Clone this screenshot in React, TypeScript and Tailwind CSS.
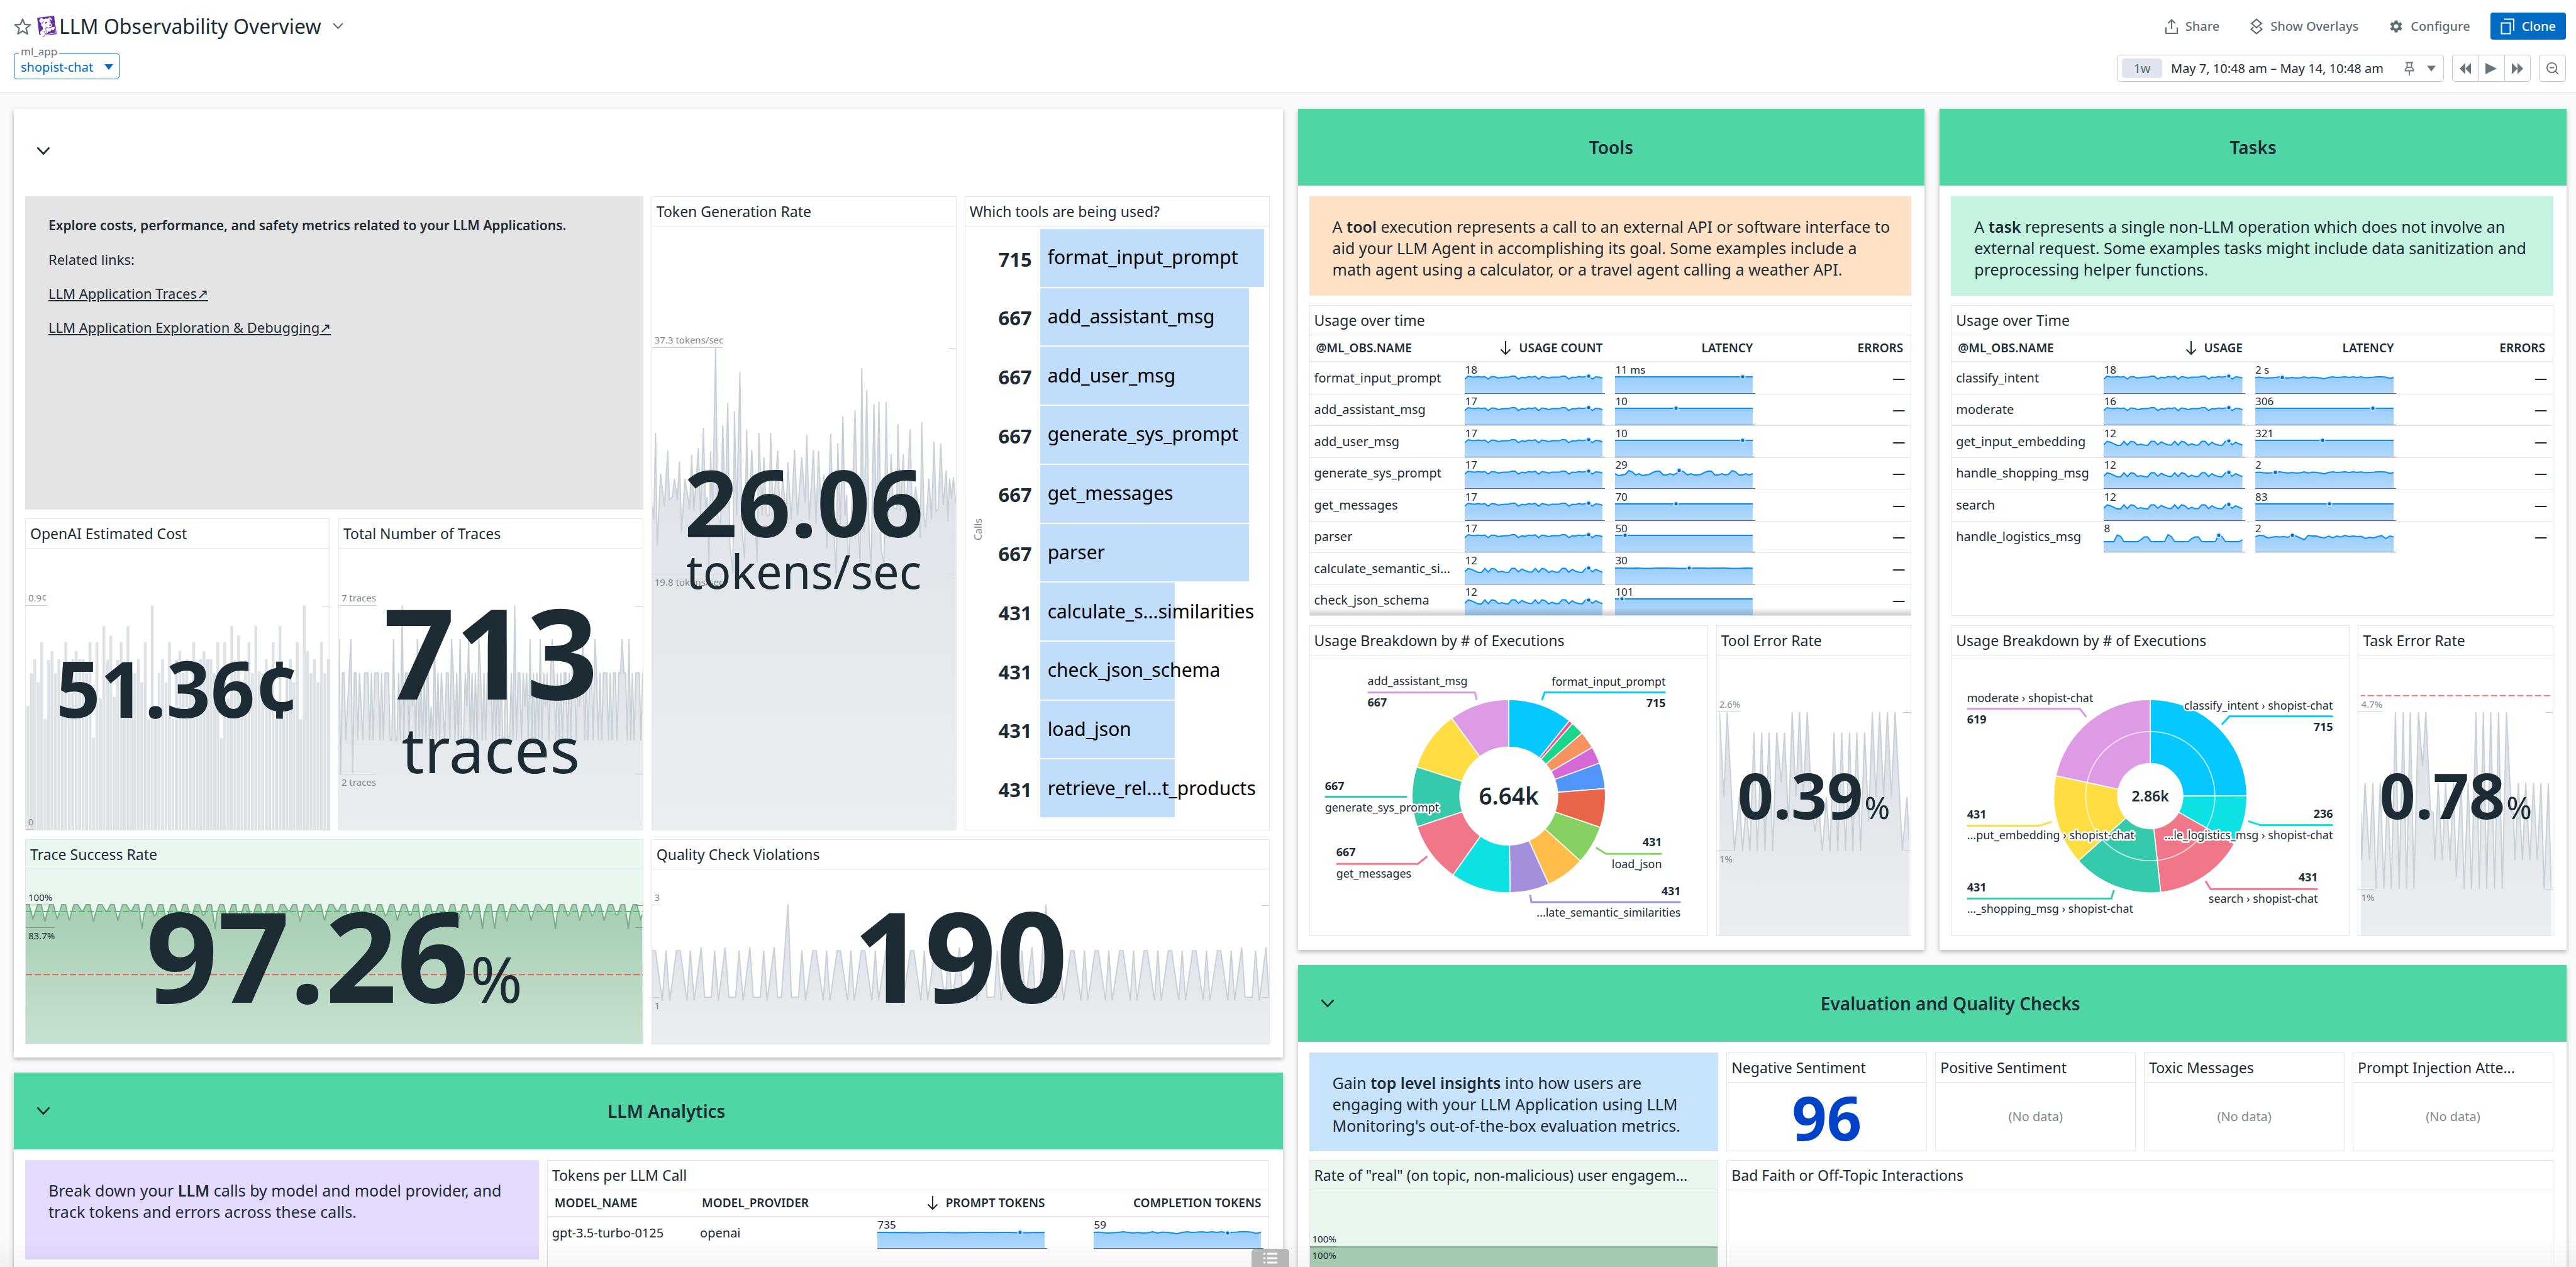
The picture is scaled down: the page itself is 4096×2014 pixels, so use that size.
import type { ReactNode } from "react";
import { ZoomOut } from "lucide-react";
import { MdSettings } from "react-icons/md";
import { SiDatadog } from "react-icons/si";

/* ---------- shared pieces ---------- */

function Chevron({ className }: { className: string }) {
  return (
    <svg viewBox="0 0 22 14" fill="none" stroke="currentColor" strokeWidth="2.6" className={className} aria-hidden="true">
      <path d="M1.5 1.5 11 11.5 20.5 1.5" />
    </svg>
  );
}

function Caret({ className }: { className: string }) {
  return (
    <svg viewBox="0 0 14 9" fill="currentColor" className={className} aria-hidden="true">
      <path d="M0 0h14L7 9z" />
    </svg>
  );
}

function Group({ title, collapsible, plain, children }: { title?: string; collapsible?: boolean; plain?: boolean; children: ReactNode }) {
  return (
    <section className="bg-white shadow-[0_3px_7px_rgba(0,0,0,0.28)]">
      <header className={`flex h-[122px] items-center ${plain ? "bg-white pt-3" : "bg-[#50d6a4]"}`}>
        {collapsible && (
          <button type="button" aria-label="Collapse group" className="ml-9 text-[#1c2b34]">
            <Chevron className="h-[14px] w-[22px]" />
          </button>
        )}
        <h2 className="flex-1 text-center text-[28px] font-semibold">{title}</h2>
      </header>
      <div className="pt-[17px] pr-[21px] pl-[18px]">{children}</div>
    </section>
  );
}

function Card({ title, className = "", children }: { title: string; className?: string; children?: ReactNode }) {
  return (
    <article className={`flex min-w-0 flex-col border border-[#e1e3ee] ${className}`}>
      <h3 className="h-[47px] shrink-0 truncate border-b border-[#e1e3ee] pl-[7px] text-[23px] leading-[46px]">{title}</h3>
      <div className="relative min-h-0 flex-1">{children}</div>
    </article>
  );
}

function Note({ className, children }: { className: string; children: ReactNode }) {
  return <div className={`pt-[31px] pr-8 pl-[37px] text-[25px] leading-[34px] ${className}`}>{children}</div>;
}

/* ---------- background plots behind big values ---------- */

type Box = [number, number, number, number];

function Ticks({ box, hi, lo, hiY, loY, dark, loAbove }: { box: Box; hi: string; lo: string; hiY: number; loY: number; dark?: boolean; loAbove?: boolean }) {
  const at = (y: number) => ({ top: `${((y - box[1]) / box[3]) * 100}%` });
  const tone = dark ? "text-[#1c2b34] border-[#7f9a89]" : "text-[#80898e] border-[#c6cdd2]";
  return (
    <>
      <div style={at(hiY)} className={`absolute left-0 -translate-y-full border-b pl-1 text-[15px] leading-6 ${tone}`}>{hi}</div>
      <div style={at(loY)} className={`absolute left-0 pl-1 text-[15px] leading-6 ${loAbove ? "-translate-y-full border-b" : "border-t"} ${tone}`}>{lo}</div>
      <div style={at(hiY)} className={`absolute right-0 w-3 border-t ${tone}`} />
      <div style={at(loY)} className={`absolute right-0 w-3 border-t ${tone}`} />
    </>
  );
}

function AreaPlot({ id, box, points, green, inset, children }: { id: string; box: Box; points: string; green?: boolean; inset?: boolean; children?: ReactNode }) {
  const [x, y, w, h] = box;
  return (
    <svg
      viewBox={box.join(" ")}
      preserveAspectRatio="none"
      className={inset ? "absolute top-0 left-1 h-full w-[calc(100%-6px)]" : "absolute inset-0 h-full w-full"}
      aria-hidden="true"
    >
      <defs>
        <linearGradient id={id} x1="0" y1="0" x2="0" y2="1">
          <stop offset="0" stopColor={green ? "#a6cdb2" : "#dcdfe7"} />
          <stop offset="1" stopColor={green ? "#c7e1d0" : "#ebeef1"} />
        </linearGradient>
      </defs>
      <polygon points={`${x},${y + h} ${points} ${x + w},${y + h}`} fill={`url(#${id})`} />
      <polyline points={points} fill="none" stroke={green ? "#7bad8b" : "#c8d1d8"} strokeWidth="2" vectorEffect="non-scaling-stroke" />
      {children}
    </svg>
  );
}

function Dash({ y, x1, x2, color }: { y: number; x1: number; x2: number; color: string }) {
  return <line x1={x1} x2={x2} y1={y} y2={y} stroke={color} strokeWidth="2" strokeDasharray="10 4" vectorEffect="non-scaling-stroke" />;
}

function Big({ children, className = "" }: { children: ReactNode; className?: string }) {
  return <div className={`relative flex h-full flex-col items-center justify-center leading-none ${className}`}>{children}</div>;
}

const costBars = [
  615, 525, 487, 550, 440, 651, 489, 465, 525, 487, 550, 440, 525, 487, 465, 487, 487, 525, 440, 702, 440, 594, 396, 489, 422, 590, 489,
  440, 525, 396, 520, 525, 487, 550, 440, 650, 340,
];
const costSeries = Array.from({ length: 88 }, (_, i) => (i === 73 ? 396 : i === 80 ? 340 : costBars[i % 37]));

const traceLevels =
  "62553456255354355535355535355533633537355354536353536343635354355365353633546353536535355535353533633537355354536353536354535653535355353653545635355365353555353553556553635355535";
const tracePoints = traceLevels
  .split("")
  .map((d, i, a) => `${(822 + (735 * i) / (a.length - 1)).toFixed(1)},${801 - (Number(d) - 2) * 92.2}`)
  .join(" ");

const tokenPoints =
  "24,768 28,800 32,588 36,864 44,688 53,768 61,631 65,752 72,745 77,700 84,752 89,658 94,830 102,702 109,745 113,775 118,642 123,780 129,700 134,626 139,790 146,576 151,770 155,745 159,910 163,634 168,770 175,380 180,790 187,810 192,570 198,770 204,514 209,860 216,930 220,535 225,790 233,440 237,810 244,895 249,580 254,820 261,630 268,770 274,905 278,588 286,790 290,648 296,790 302,790 306,588 312,780 323,632 328,790 335,700 343,790 347,660 355,800 363,630 370,790 380,648 388,760 392,593 398,800 408,630 414,810 420,632 427,790 433,690 440,870 449,590 455,800 462,932 466,614 472,820 478,548 483,790 487,740 491,910 500,760 507,533 513,790 519,910 523,430 528,830 535,484 540,815 545,930 552,518 558,800 564,512 569,870 576,910 581,512 586,800 593,640 598,770 606,775 609,567 615,780 622,640 628,800 638,580 644,820 651,720 656,760 662,845 666,562 671,790 675,820 683,700 689,800 695,610 700,780 705,775 711,614 717,765 724,680 728,805 732,700 737,750 741,697 747,760";

const dipDepths = [1200, 1208, 1200, 1205, 1178, 1208, 1179, 1205, 1178, 1228, 1192, 1205, 1192, 1205, 1190, 1228, 1200];
const successPoints = Array.from({ length: 51 }, (_, k) => {
  const x = 66 + k * 29.5;
  const d = k % 20 === 17 || k === 38 ? 1228 : dipDepths[k % 17];
  return `${x - 5},1161 ${x + 4},1161 ${x + 13},${d} ${x + 17},${Math.min(d, 1188)}`;
}).join(" ");

const wide = (c: number) => `${c - 4},717 ${c + 4},717 ${c + 21},998 ${c + 29},717 ${c + 37},998`;
const qualityPoints = [
  "24,717 32,717 48,998 57,717 66,998 82,717 91,717 107,998 115,717 124,998 141,698 149,979 165,979 173,717 182,998 198,698 207,979 223,979 231,717 241,998 257,698 265,979 282,979 290,717 298,998 315,698 323,979 332,979 348,457 356,979 373,979 381,717 390,998",
  ...[411, 469, 527, 585, 644, 702].map(wide),
  "757,698 765,979 782,979 790,717 798,998 815,698 823,979 840,979 847,717 856,998 873,698 881,979 897,979 906,717 914,998 930,698 938,979 947,979 963,457 980,979 988,979 996,717 1005,998",
  ...[1026, 1084, 1143, 1201, 1259, 1317, 1376].map(wide),
  "1430,698 1438,979 1455,979 1463,717 1472,998 1488,698 1495,979",
].join(" ");

const toolErrorPoints =
  "1040,455 1051,835 1059,455 1077,1076 1089,835 1097,1076 1106,870 1115,1076 1125,547 1133,1076 1144,547 1152,1076 1162,547 1171,1076 1181,547 1192,770 1200,547 1210,945 1219,455 1228,835 1237,455 1246,835 1256,455 1266,830 1275,990 1284,870 1293,1076 1303,835 1312,1076 1322,547 1331,1076 1341,547 1350,1076 1360,547 1368,1076 1378,547 1387,1076 1397,547 1407,945 1416,455 1425,835 1434,455 1444,835 1453,455 1463,835 1472,455 1490,1076 1501,835 1508,1076";
const taskErrorPoints =
  "1045,905 1047,1117 1055,772 1066,1117 1074,772 1082,1245 1092,772 1101,1245 1110,800 1119,1245 1129,455 1138,1245 1148,455 1156,1245 1165,455 1174,1245 1185,455 1195,700 1203,455 1214,895 1221,905 1225,1117 1233,772 1243,1117 1251,772 1262,1117 1270,772 1277,1192 1289,772 1296,1245 1306,772 1314,1245 1325,455 1333,1245 1343,455 1351,1245 1361,455 1370,1245 1380,455 1389,1245 1399,455 1411,900 1416,900 1420,1117 1428,772 1438,1117 1446,772 1456,1117 1465,772 1474,1117 1483,772 1491,1245 1501,772 1508,1245";

const costBox: Box = [62, 184, 735, 770];
const traceBox: Box = [822, 184, 735, 770];
const tokenBox: Box = [24, 84, 723, 1474];
const successBox: Box = [62, 1064, 1497, 480];
const qualityBox: Box = [24, 260, 1471, 980];
const toolErrorBox: Box = [1040, 203, 468, 1250];
const taskErrorBox: Box = [1045, 203, 463, 1250];

/* ---------- tables with sparklines ---------- */

const shapes: Record<string, number[]> = {
  busy: [6.6, 2, 3, 3.5, 2.5, 3.5, 2.5, 6.6, 2.5, 3, 5, 4, 3.6, 3.6, 2, 2, 6.6, 3.6, 4.6, 2.5, 3.5, 2, 6.6, 2.5, 3.5, 5, 3.6, 3.6, 3.6, 2, 2, 6.6, 3.6, 4, 2.5, 3.5, 2.5, 2, 6.6, 3, 3.5, 5],
  wavy: [10, 4.5, 6, 8.4, 11, 11, 4.5, 10.5, 4.5, 5.5, 10.5, 9, 10.5, 11, 4.5, 4.5, 10, 5.5, 8, 10, 10.5, 4.5, 10.5, 4.5, 6, 11, 8.4, 10.5, 10.5, 4.5, 4.5, 10.5, 6, 9, 10.5, 11, 4.5, 4.5, 10, 6, 8.4, 10.5],
  humps: [13, 13, 13, 13, 2.5, 4.5, 13, 13, 13, 13, 13, 10, 5.5, 5.5, 13, 13, 13, 13, 13, 2, 5, 13, 13, 13, 13, 13, 8, 5.5, 5.5, 13, 13, 13, 13, 13, 2.5, 5, 13, 13, 13, 13, 13, 10],
  flat: [3, 3],
  nearly: [4, 4, 4.3, 4, 4.5, 4.5, 4, 4, 4.3, 4.5, 4.5, 4, 4, 4.3, 4, 4, 4.4, 4.4, 4, 4.2],
  swell: [6, 9, 8, 7, 1, 3, 8, 6, 9, 8, 7, 4, 2, 2, 8, 8, 6, 8, 5, 1, 3, 8, 6, 8, 8, 7, 4, 2, 2, 8, 8, 6, 8, 7, 1, 3, 8, 8, 6, 8, 6],
  ripple: [4, 3.6, 4.4, 5, 4.4, 4, 3, 4, 5, 4, 5, 4.4, 3, 5, 3.6, 4, 5, 6, 4, 3, 4, 3.6, 3, 4, 3, 4, 3, 4.6, 4, 3.6, 3, 3, 3.6, 5.4, 4],
  rough: [5, 3, 3.6, 7, 6, 5, 5.4, 5, 6, 3, 4, 7, 10, 3, 4, 4, 6, 7, 4, 7, 4, 5.6, 3, 5, 4, 5, 4.6, 8, 6, 7, 5, 3.4, 8, 4, 5.6],
};

function Spark({ label, shape, dot }: { label: string; shape: string; dot: number }) {
  const ys = shapes[shape];
  const pts = ys.map((y, i) => `${((100 * i) / (ys.length - 1)).toFixed(2)},${y}`).join(" ");
  const dotY = ys[Math.min(ys.length - 1, Math.round(dot * (ys.length - 1)))];
  return (
    <div className="mr-3 ml-auto max-w-[266px] pt-[2px]">
      <div className="text-left text-[17px] leading-[17px]">{label}</div>
      <div className="relative h-[30px]">
        <svg viewBox="0 0 100 30" preserveAspectRatio="none" className="absolute inset-0 h-full w-full" aria-hidden="true">
          <defs>
            <linearGradient id="sparkFill" gradientUnits="userSpaceOnUse" x1="0" y1="0" x2="0" y2="30">
              <stop offset="0" stopColor="#99cdfb" />
              <stop offset="1" stopColor="#b2d9fd" />
            </linearGradient>
          </defs>
          <polygon points={`0,30 ${pts} 100,30`} fill="url(#sparkFill)" />
          <polyline points={pts} fill="none" stroke="#0a8df5" strokeWidth="2" vectorEffect="non-scaling-stroke" />
        </svg>
        <div className="absolute -right-1 bottom-0 left-0 h-px bg-[#5f6b85]" />
        <div
          style={{ left: `${dot * 100}%`, top: `${dotY}px` }}
          className="absolute size-[9px] -translate-x-1/2 -translate-y-1/2 rounded-full border-2 border-[#c3e2fd] bg-[#0069c9]"
        />
      </div>
    </div>
  );
}

function SortArrow() {
  return (
    <svg viewBox="0 0 18 24" fill="none" stroke="currentColor" strokeWidth="2" className="mr-3 inline-block h-6 w-[18px] align-[-5px]" aria-label="sorted descending">
      <path d="M9 1v21M1.5 14.5 9 22l7.500-7.500" />
    </svg>
  );
}

type Row = { name: string; usage: [string, string, number]; latency: [string, string, number] };

function UsageTable({ countLabel, nameCol, rows }: { countLabel: string; nameCol: string; rows: Row[] }) {
  const th = "border-b-2 border-[#e4e5ed] text-[19px] font-semibold";
  return (
    <table className="w-full table-fixed border-collapse">
      <thead>
        <tr className="h-[42px]">
          <th className={`${th} ${nameCol} pl-[10px] text-left`}>@ML_OBS.NAME</th>
          <th className={`${th} pr-3 text-right`}><SortArrow />{countLabel}</th>
          <th className={`${th} pr-3 text-right`}>LATENCY</th>
          <th className={`${th} pr-3 text-right`}>ERRORS</th>
        </tr>
      </thead>
      <tbody>
        {rows.map((r) => (
          <tr key={r.name} className="border-b border-[#e1e3ee] odd:h-[51px] even:h-[50px] last:border-b-0">
            <td className="pl-[7px] text-[20px] leading-5 whitespace-nowrap">{r.name}</td>
            <td className="pl-2 align-bottom"><Spark label={r.usage[0]} shape={r.usage[1]} dot={r.usage[2]} /></td>
            <td className="pl-2 align-bottom"><Spark label={r.latency[0]} shape={r.latency[1]} dot={r.latency[2]} /></td>
            <td className="pr-[9px] text-right text-[20px] leading-5 font-semibold">—</td>
          </tr>
        ))}
      </tbody>
    </table>
  );
}

const toolRows: Row[] = [
  { name: "format_input_prompt", usage: ["18", "busy", 0.9], latency: ["11 ms", "flat", 0.925] },
  { name: "add_assistant_msg", usage: ["17", "busy", 0.9], latency: ["10", "flat", 0.44] },
  { name: "add_user_msg", usage: ["17", "busy", 0.9], latency: ["10", "flat", 0.925] },
  { name: "generate_sys_prompt", usage: ["17", "busy", 0.9], latency: ["29", "swell", 0.463] },
  { name: "get_messages", usage: ["17", "busy", 0.9], latency: ["70", "flat", 0.44] },
  { name: "parser", usage: ["17", "busy", 0.9], latency: ["50", "flat", 0.07] },
  { name: "calculate_semantic_si...", usage: ["12", "wavy", 0.9], latency: ["30", "nearly", 0.535] },
  { name: "check_json_schema", usage: ["12", "wavy", 0.9], latency: ["101", "flat", 0.047] },
];
const taskRows: Row[] = [
  { name: "classify_intent", usage: ["18", "busy", 0.9], latency: ["2 s", "ripple", 0.195] },
  { name: "moderate", usage: ["16", "busy", 0.9], latency: ["306", "flat", 0.85] },
  { name: "get_input_embedding", usage: ["12", "wavy", 0.9], latency: ["321", "flat", 0.487] },
  { name: "handle_shopping_msg", usage: ["12", "wavy", 0.9], latency: ["2", "ripple", 0.147] },
  { name: "search", usage: ["12", "wavy", 0.9], latency: ["83", "flat", 0.535] },
  { name: "handle_logistics_msg", usage: ["8", "humps", 0.826], latency: ["2", "rough", 0.27] },
];

/* ---------- pies ---------- */

type Slice = { to: number; color: string };
type Callout = { value: string; name: string; x: number; end?: boolean; line: string; color: string; valueY: number; nameY: number };

function Pie({ slices, inner, ring, total, totalClass, callouts }: { slices: Slice[]; inner: number; ring?: number; total: string; totalClass: string; callouts: Callout[] }) {
  const cx = 316;
  const cy = 224;
  const R = 154;
  const at = (r: number, deg: number) => {
    const a = (deg * Math.PI) / 180;
    return `${(cx + r * Math.sin(a)).toFixed(2)} ${(cy - r * Math.cos(a)).toFixed(2)}`;
  };
  return (
    <svg viewBox="0 0 632 446" className="absolute inset-0 h-full w-full" role="img" aria-label={`Breakdown, total ${total}`}>
      {slices.map((s, i) => {
        const from = i ? slices[i - 1].to : 0;
        const big = s.to - from > 180 ? 1 : 0;
        return (
          <path
            key={s.color}
            d={`M${at(inner, from)}L${at(R, from)}A${R} ${R} 0 ${big} 1 ${at(R, s.to)}L${at(inner, s.to)}A${inner} ${inner} 0 ${big} 0 ${at(inner, from)}Z`}
            fill={s.color}
            stroke="#fff"
            strokeWidth="1.6"
          />
        );
      })}
      {ring && <circle cx={cx} cy={cy} r={ring} fill="none" stroke="#fff" strokeOpacity="0.8" strokeWidth="1.6" />}
      <text x={cx} y={cy} textAnchor="middle" dominantBaseline="central" className={`fill-[#1c2b34] font-semibold ${totalClass}`}>{total}</text>
      {callouts.map((c) => (
        <g key={c.name} textAnchor={c.end ? "end" : "start"} className="text-[18px]">
          <polyline points={c.line} fill="none" stroke={c.color} strokeWidth="3" />
          <text x={c.x} y={c.valueY} className="fill-[#1c2b34] font-bold">{c.value}</text>
          <text x={c.x} y={c.nameY} stroke="#fff" strokeWidth="5" strokeLinejoin="round" paintOrder="stroke" className="fill-[#1c2b34]">{c.name}</text>
        </g>
      ))}
    </svg>
  );
}

const toolSlices: Slice[] = [
  { to: 38.8, color: "#05c8ff" }, { to: 41.3, color: "#ef5290" }, { to: 49.3, color: "#1ad68a" }, { to: 59.7, color: "#f7935f" },
  { to: 70, color: "#d669d6" }, { to: 85.5, color: "#5097f9" }, { to: 108.9, color: "#e96548" }, { to: 132.2, color: "#86d162" },
  { to: 155.6, color: "#ffbe4a" }, { to: 179.2, color: "#a58edb" }, { to: 215.3, color: "#0ce2e4" }, { to: 251.5, color: "#ef7789" },
  { to: 287.6, color: "#34caab" }, { to: 323.8, color: "#ffdd43" }, { to: 359.9, color: "#dd9be6" },
];
const toolCallouts: Callout[] = [
  { value: "667", name: "add_assistant_msg", x: 91, line: "91,59 262,59 265,71", color: "#dd9be6", valueY: 81, nameY: 47 },
  { value: "715", name: "format_input_prompt", x: 566, end: true, line: "566,59 373,59 369,71", color: "#05c8ff", valueY: 82, nameY: 48 },
  { value: "667", name: "generate_sys_prompt", x: 23, line: "23,225 154,225", color: "#34caab", valueY: 214, nameY: 249 },
  { value: "667", name: "get_messages", x: 41, line: "41,332 171,332 186,320", color: "#ef7789", valueY: 320, nameY: 354 },
  { value: "431", name: "load_json", x: 560, end: true, line: "560,316 471,316 455,306", color: "#86d162", valueY: 304, nameY: 339 },
  { value: "431", name: "...late_semantic_similarities", x: 590, end: true, line: "590,393 352,393 350,381", color: "#a58edb", valueY: 382, nameY: 416 },
];
const taskSlices: Slice[] = [
  { to: 89.9, color: "#05c8ff" }, { to: 119.6, color: "#0ce2e4" }, { to: 173.8, color: "#ef7789" },
  { to: 228, color: "#34caab" }, { to: 282.2, color: "#ffdd43" }, { to: 359.9, color: "#dd9be6" },
];
const taskCallouts: Callout[] = [
  { value: "619", name: "moderate › shopist-chat", x: 24, line: "24,85 204,85 214,98", color: "#dd9be6", valueY: 108, nameY: 74 },
  { value: "715", name: "classify_intent › shopist-chat", x: 607, end: true, line: "607,97 442,97 430,110", color: "#05c8ff", valueY: 120, nameY: 86 },
  { value: "236", name: "...le_logistics_msg › shopist-chat", x: 607, end: true, line: "607,270 491,270 472,264", color: "#0ce2e4", valueY: 259, nameY: 293 },
  { value: "431", name: "search › shopist-chat", x: 583, end: true, line: "583,372 412,372 404,359", color: "#ef7789", valueY: 360, nameY: 394 },
  { value: "431", name: "...put_embedding › shopist-chat", x: 24, line: "24,271 140,271 159,265", color: "#ffdd43", valueY: 260, nameY: 293 },
  { value: "431", name: "..._shopping_msg › shopist-chat", x: 24, line: "24,387 254,387 258,374", color: "#34caab", valueY: 376, nameY: 410 },
];

/* ---------- top list ---------- */

const topTools: [number, string][] = [
  [715, "format_input_prompt"], [667, "add_assistant_msg"], [667, "add_user_msg"], [667, "generate_sys_prompt"], [667, "get_messages"],
  [667, "parser"], [431, "calculate_s...similarities"], [431, "check_json_schema"], [431, "load_json"], [431, "retrieve_rel...t_products"],
];

function TopList() {
  return (
    <div className="flex h-full items-center pt-1 pr-2">
      <div className="flex w-10 justify-center text-[16px] text-[#80898e]">
        <span className="rotate-180 [writing-mode:vertical-rl]">Calls</span>
      </div>
      <ul className="flex h-full flex-1 flex-col gap-[2px] pb-5">
        {topTools.map(([n, name]) => (
          <li key={name} className="flex min-h-0 flex-1 items-center">
            <span className="w-[66px] pt-1 text-right text-[31px] font-bold">{n}</span>
            <div className="ml-[13px] h-full flex-1">
              <div style={{ width: `${(n / 715) * 100}%` }} className="flex h-full items-center bg-[#c1ddfc] pb-[2px] pl-3 text-[30px] whitespace-nowrap text-black">
                {name}
              </div>
            </div>
          </li>
        ))}
      </ul>
    </div>
  );
}

/* ---------- page header ---------- */

function PageHeader() {
  const action = "flex items-center gap-[11px] text-[20px] font-medium text-[#5f6d76]";
  const step = "flex h-full flex-1 items-center justify-center";
  return (
    <header className="flex h-[148px] flex-col border-b border-[#dde2e9] bg-white pt-5 pr-4 pl-[22px]">
      <div className="flex h-[43px] items-center">
        <button type="button" aria-label="Favorite" className="text-[#69757c]">
          <svg viewBox="0 0 28 28" fill="none" stroke="currentColor" strokeWidth="2.4" strokeLinejoin="round" className="size-[28px]" aria-hidden="true">
            <path d="m14 2.5 3.4 8.2 8.900.700-6.800 5.800 2.100 8.700L14 21.200l-7.600 4.700 2.100-8.700-6.800-5.800 8.900-.700z" />
          </svg>
        </button>
        <SiDatadog className="mr-[3px] ml-2 size-[33px] text-[#632ca6]" aria-hidden="true" />
        <h1 className="text-[32px]">LLM Observability Overview</h1>
        <button type="button" aria-label="Dashboard menu" className="ml-[18px] text-[#5f6d76]">
          <Chevron className="h-[11px] w-[17px]" />
        </button>
        <div className="ml-auto flex h-full items-center gap-12">
          <button type="button" className={action}>
            <svg viewBox="0 0 22 26" fill="none" stroke="currentColor" strokeWidth="2.2" className="h-[26px] w-[22px]" aria-hidden="true">
              <path d="M2 14.500V24h18v-9.500M11 17V2.500M5.500 8 11 2.500 16.500 8" />
            </svg>
            Share
          </button>
          <button type="button" className={action}>
            <svg viewBox="0 0 22 26" fill="none" stroke="currentColor" strokeWidth="2.2" className="h-[26px] w-[22px]" aria-hidden="true">
              <path d="m11 1.600 7.800 6.700L11 15 3.200 8.300zM6 14 2.500 17.600 11 24.300l8.500-6.700L16 14" />
            </svg>
            Show Overlays
          </button>
          <button type="button" className={action}>
            <MdSettings className="size-6" aria-hidden="true" />
            Configure
          </button>
          <button type="button" className="-ml-4 flex h-full items-center gap-3 rounded-[4px] bg-[#006bc2] px-4 text-[20px] font-medium text-white">
            <svg viewBox="0 0 22 26" fill="none" stroke="currentColor" strokeWidth="2" className="h-[26px] w-[22px]" aria-hidden="true">
              <path d="M1.500 7.500h14V24.500h-14zM6 1.500h15V20" />
            </svg>
            Clone
          </button>
        </div>
      </div>
      <div className="mt-[21px] flex items-start justify-between">
        <div className="relative">
          <label htmlFor="ml-app" className="absolute -top-[14px] left-2 bg-white px-[3px] text-[17px] leading-6 text-[#69757c]">ml_app</label>
          <select id="ml-app" className="h-[42px] w-[168px] appearance-none rounded-[5px] border border-[#006bc2] bg-transparent pt-1 pl-[10px] text-[20px] text-[#006bc2]">
            <option>shopist-chat</option>
          </select>
          <Caret className="pointer-events-none absolute top-[18px] right-[10px] h-[9px] w-[14px] text-[#006bc2]" />
        </div>
        <div className="mt-[3px] flex h-[43px] gap-[13px] text-[#69757c]">
          <button type="button" className="flex h-full w-[520px] items-center rounded-[5px] border border-[#bfc5dc] pr-3 pl-[7px] text-[20px]">
            <span className="flex h-[31px] w-16 items-center justify-center rounded-[5px] bg-[#e1e4ee] text-[#5f6d76]">1w</span>
            <span className="ml-[14px] flex-1 text-left text-[#1c2b34]">May 7, 10:48 am – May 14, 10:48 am</span>
            <svg viewBox="0 0 16 22" fill="none" stroke="currentColor" strokeWidth="1.8" className="mr-5 h-[22px] w-4" aria-hidden="true">
              <path d="M2 1.500h12M4.500 1.500v7M11.500 1.500v7M1.500 14.500v-2l3-3.500h7l3 3.500v2zM8 14.500V22" />
            </svg>
            <Caret className="h-[10px] w-[14px]" />
          </button>
          <div className="flex h-full w-[125px] divide-x divide-[#bfc5dc] rounded-[5px] border border-[#bfc5dc]">
            <button type="button" aria-label="Back" className={step}>
              <svg viewBox="0 0 18 18" fill="currentColor" className="size-[18px]" aria-hidden="true"><path d="M9 0v18L0 9zM18 0v18L9 9z" /></svg>
            </button>
            <button type="button" aria-label="Play" className={step}>
              <svg viewBox="0 0 18 18" fill="currentColor" className="size-[18px]" aria-hidden="true"><path d="M0 0v18L18 9z" /></svg>
            </button>
            <button type="button" aria-label="Forward" className={step}>
              <svg viewBox="0 0 18 18" fill="currentColor" className="size-[18px]" aria-hidden="true"><path d="M9 0v18l9-9zM0 0v18l9-9z" /></svg>
            </button>
          </div>
          <button type="button" aria-label="Zoom out" className="flex h-full w-[43px] items-center justify-center rounded-[5px] border border-[#bfc5dc]">
            <ZoomOut className="size-[23px]" strokeWidth={2} />
          </button>
        </div>
      </div>
    </header>
  );
}

/* ---------- groups ---------- */

function OverviewGroup() {
  return (
    <Group collapsible plain>
      <div className="grid grid-cols-4 grid-rows-[498px_496px_326px] gap-x-[13px] gap-y-[14px] pb-[21px]">
        <div className="col-span-2 flex flex-col items-start gap-6 bg-[#e4e4e4] px-[37px] pt-[31px] text-[22px] leading-[30px]">
          <p className="text-[21px] font-semibold">Explore costs, performance, and safety metrics related to your LLM Applications.</p>
          <p>Related links:</p>
          <a href="#traces" className="underline">LLM Application Traces↗</a>
          <a href="#explore" className="underline">LLM Application Exploration &amp; Debugging↗</a>
        </div>
        <Card title="Token Generation Rate" className="row-span-2">
          <AreaPlot id="tokenFill" box={tokenBox} points={tokenPoints} />
          <Ticks box={tokenBox} hi="37.3 tokens/sec" lo="19.8 tokens/sec" hiY={381} loY={933} />
          <Big className="pb-3">
            <div className="text-[148px] leading-none font-bold">26.06</div>
            <div className="text-[74px] leading-none">tokens/sec</div>
          </Big>
        </Card>
        <Card title="Which tools are being used?" className="row-span-2">
          <TopList />
        </Card>
        <Card title="OpenAI Estimated Cost">
          <svg viewBox={costBox.join(" ")} preserveAspectRatio="none" className="absolute inset-0 h-full w-full" aria-hidden="true">
            {costSeries.map((y, i) => (
              <rect key={i} x={63.5 + i * 8.36} y={y} width={7} height={954 - y} fill="#dde2e6" />
            ))}
          </svg>
          <Ticks box={costBox} hi="0.9¢" lo="0" hiY={340} loY={954} loAbove />
          <Big className="pb-1"><div className="text-[123px] leading-none font-bold">51.36¢</div></Big>
        </Card>
        <Card title="Total Number of Traces">
          <AreaPlot id="traceFill" box={traceBox} points={tracePoints} />
          <Ticks box={traceBox} hi="7 traces" lo="2 traces" hiY={340} loY={801} />
          <Big className="gap-[6px] pb-4">
            <div className="text-[199px] leading-none font-bold">713</div>
            <div className="text-[100px] leading-none">traces</div>
          </Big>
        </Card>
        <Card title="Trace Success Rate" className="col-span-2 bg-[#eaf7ef]">
          <AreaPlot id="successFill" box={successBox} points={successPoints} green>
            <Dash y={1180} x1={62} x2={1559} color="#4dbd74" />
            <Dash y={1354} x1={62} x2={1559} color="#eb6353" />
          </AreaPlot>
          <Ticks box={successBox} hi="100%" lo="83.7%" hiY={1162} loY={1224} dark />
          <Big className="pb-2">
            <div className="flex items-baseline gap-[2px]">
              <span className="text-[200px] leading-none font-bold">97.26</span>
              <span className="text-[100px] leading-none">%</span>
            </div>
          </Big>
        </Card>
        <Card title="Quality Check Violations" className="col-span-2">
          <AreaPlot id="qualityFill" box={qualityBox} points={qualityPoints} />
          <Ticks box={qualityBox} hi="3" lo="1" hiY={460} loY={979} />
          <Big className="pb-2"><div className="text-[199px] leading-none font-bold">190</div></Big>
        </Card>
      </div>
    </Group>
  );
}

function LlmGroup() {
  const th = "border-b-2 border-[#e4e5ed] text-[19px] font-semibold";
  return (
    <Group title="LLM Analytics" collapsible>
      <div className="grid grid-cols-12 grid-rows-[158px] gap-x-[13px] gap-y-[14px]">
        <Note className="col-span-5 bg-[#e4dbff]">
          Break down your <b className="font-semibold">LLM</b> calls by model and model provider, and track tokens and errors across these calls.
        </Note>
        <Card title="Tokens per LLM Call" className="col-span-7 row-span-2 h-[330px]">
          <table className="w-full table-fixed border-collapse">
            <colgroup>
              <col className="w-[20%]" />
              <col className="w-[20%]" />
              <col className="w-[30%]" />
              <col className="w-[30%]" />
            </colgroup>
            <thead>
              <tr className="h-[42px]">
                <th className={`${th} pl-[11px] text-left`}>MODEL_NAME</th>
                <th className={`${th} pl-4 text-left`}>MODEL_PROVIDER</th>
                <th className={`${th} pr-3 text-right`}><SortArrow />PROMPT TOKENS</th>
                <th className={`${th} pr-3 text-right`}>COMPLETION TOKENS</th>
              </tr>
            </thead>
            <tbody>
              <tr className="h-[51px]">
                <td className="pl-[7px] text-[20px]">gpt-3.5-turbo-0125</td>
                <td className="pl-[13px] text-[20px]">openai</td>
                <td className="align-bottom"><Spark label="735" shape="nearly" dot={0.85} /></td>
                <td className="align-bottom"><Spark label="59" shape="ripple" dot={0.8} /></td>
              </tr>
            </tbody>
          </table>
        </Card>
      </div>
    </Group>
  );
}

function ToolsGroup() {
  return (
    <Group title="Tools">
      <div className="grid grid-cols-3 grid-rows-[158px_494px_494px] gap-x-[13px] gap-y-[15px] pb-[22px]">
        <Note className="col-span-3 bg-[#ffe2c5]">
          A <b className="font-semibold">tool</b> execution represents a call to an external API or software interface to aid your LLM Agent in accomplishing its goal. Some examples include a math agent using a calculator, or a travel agent calling a weather API.
        </Note>
        <Card title="Usage over time" className="col-span-3">
          <div className="absolute inset-0 overflow-hidden">
            <UsageTable countLabel="USAGE COUNT" nameCol="w-[25%]" rows={toolRows} />
          </div>
          <div className="absolute inset-x-0 bottom-0 h-3 bg-linear-to-t from-black/20 to-transparent" />
        </Card>
        <Card title="Usage Breakdown by # of Executions" className="col-span-2">
          <Pie slices={toolSlices} inner={78} total="6.64k" totalClass="text-[37px]" callouts={toolCallouts} />
        </Card>
        <Card title="Tool Error Rate">
          <AreaPlot id="toolErrFill" box={toolErrorBox} points={toolErrorPoints} inset />
          <Ticks box={toolErrorBox} hi="2.6%" lo="1%" hiY={457} loY={1075} />
          <Big className="pb-1">
            <div className="flex items-baseline gap-[2px]">
              <span className="text-[100px] leading-none font-bold">0.39</span>
              <span className="text-[49px] leading-none">%</span>
            </div>
          </Big>
        </Card>
      </div>
    </Group>
  );
}

function TasksGroup() {
  return (
    <Group title="Tasks">
      <div className="grid grid-cols-3 grid-rows-[158px_494px_494px] gap-x-[13px] gap-y-[15px] pb-[22px]">
        <Note className="col-span-3 bg-[#c4f3e0]">
          A <b className="font-semibold">task</b> represents a single non-LLM operation which does not involve an external request. Some examples tasks might include data sanitization and preprocessing helper functions.
        </Note>
        <Card title="Usage over Time" className="col-span-3">
          <UsageTable countLabel="USAGE" nameCol="w-[24.500%]" rows={taskRows} />
        </Card>
        <Card title="Usage Breakdown by # of Executions" className="col-span-2">
          <Pie slices={taskSlices} inner={52} ring={103} total="2.86k" totalClass="text-[23px]" callouts={taskCallouts} />
        </Card>
        <Card title="Task Error Rate">
          <AreaPlot id="taskErrFill" box={taskErrorBox} points={taskErrorPoints} inset>
            <Dash y={382} x1={1040} x2={1508} color="#f37b88" />
          </AreaPlot>
          <Ticks box={taskErrorBox} hi="4.7%" lo="1%" hiY={457} loY={1246} />
          <Big className="pb-1">
            <div className="flex items-baseline gap-[2px]">
              <span className="text-[100px] leading-none font-bold">0.78</span>
              <span className="text-[49px] leading-none">%</span>
            </div>
          </Big>
        </Card>
      </div>
    </Group>
  );
}

const rateBox: Box = [0, 0, 650, 280];

function EvaluationGroup() {
  return (
    <Group title="Evaluation and Quality Checks" collapsible>
      <div className="grid grid-cols-6 grid-rows-[157px_330px] gap-x-[13px] gap-y-[14px]">
        <Note className="col-span-2 bg-[#c8e3fc]">
          Gain <b className="font-semibold">top level insights</b> into how users are engaging with your LLM Application using LLM Monitoring's out-of-the-box evaluation metrics.
        </Note>
        <Card title="Negative Sentiment">
          <Big><div className="text-[97px] leading-none font-bold text-[#0042c8]">96</div></Big>
        </Card>
        {["Positive Sentiment", "Toxic Messages", "Prompt Injection Atte..."].map((t) => (
          <Card key={t} title={t}>
            <p className="flex h-full items-center justify-center text-[20px] text-[#80898e]">(No data)</p>
          </Card>
        ))}
        <Card title={'Rate of "real" (on topic, non-malicious) user engagem...'} className="col-span-2 bg-[#eaf7ef]">
          <AreaPlot id="rateFill" box={rateBox} points="0,90 650,90" green />
          <Ticks box={rateBox} hi="100%" lo="100%" hiY={90} loY={90} dark />
        </Card>
        <Card title="Bad Faith or Off-Topic Interactions" className="col-span-4" />
      </div>
    </Group>
  );
}

export default function App() {
  return (
    <div className="relative h-screen overflow-hidden bg-[#f9fafc] font-['Noto_Sans',sans-serif] text-[#1c2b34]">
      <PageHeader />
      <main className="grid grid-cols-2 items-start gap-6 pt-[25px] pr-[15px] pl-[22px]">
        <div className="flex min-w-0 flex-col gap-6">
          <OverviewGroup />
          <LlmGroup />
        </div>
        <div className="flex min-w-0 flex-col gap-6">
          <div className="grid grid-cols-2 gap-6">
            <ToolsGroup />
            <TasksGroup />
          </div>
          <EvaluationGroup />
        </div>
      </main>
      <div className="pointer-events-none absolute inset-x-0 bottom-0 h-12 bg-linear-to-t from-black/4 to-transparent" />
      <button type="button" aria-label="Table of contents" className="absolute bottom-0 left-[1990px] flex h-[29px] w-[60px] items-center justify-center rounded-t-[6px] bg-[#b5b7b7] text-white">
        <svg viewBox="0 0 22 20" stroke="currentColor" strokeWidth="3" className="h-5 w-[22px]" aria-hidden="true">
          <path d="M0 3h3M6 3h16M0 10h3M6 10h16M0 17h3M6 17h16" />
        </svg>
      </button>
    </div>
  );
}
